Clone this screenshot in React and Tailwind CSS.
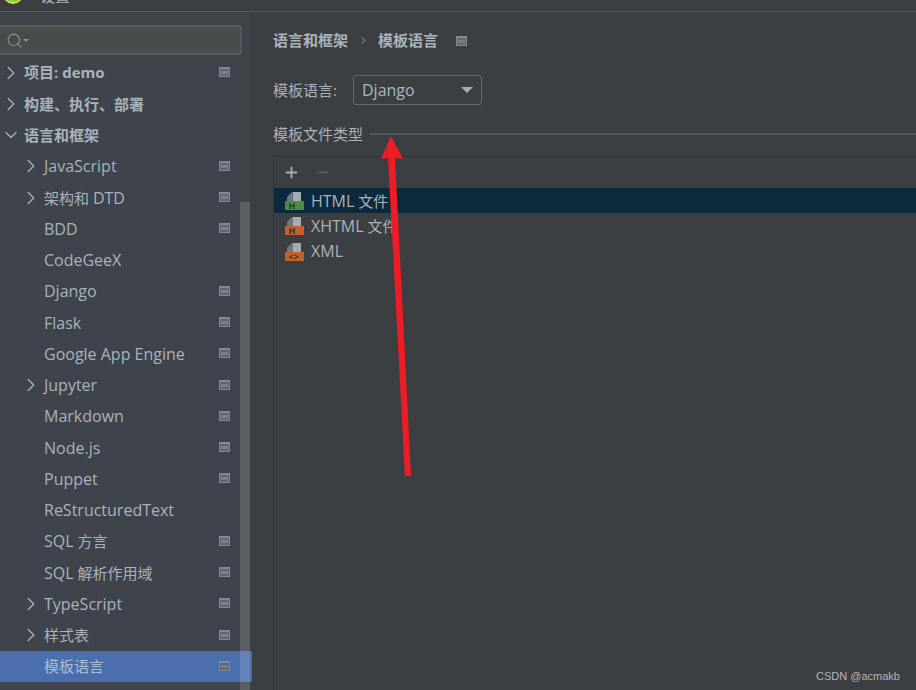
import { ChevronRight, ChevronDown, Search, Plus, Minus } from "lucide-react";

const font = { fontFamily: '"Open Sans", "Noto Sans CJK SC", sans-serif' };

const itens = [
  { nome: "项目: demo", seta: "dir", bold: true, proj: true },
  { nome: "构建、执行、部署", seta: "dir", bold: true },
  { nome: "语言和框架", seta: "baixo", bold: true },
  { latim: "JavaScript", seta: "dir", sub: true, proj: true },
  { nome: "架构和 ", latim: "DTD", seta: "dir", sub: true, proj: true },
  { latim: "BDD", sub: true, proj: true },
  { latim: "CodeGeeX", sub: true },
  { latim: "Django", sub: true, proj: true },
  { latim: "Flask", sub: true, proj: true },
  { latim: "Google App Engine", sub: true, proj: true },
  { latim: "Jupyter", seta: "dir", sub: true, proj: true },
  { latim: "Markdown", sub: true, proj: true },
  { latim: "Node.js", sub: true, proj: true },
  { latim: "Puppet", sub: true, proj: true },
  { latim: "ReStructuredText", sub: true },
  { latim: "SQL", nome: " 方言", antes: true, sub: true, proj: true },
  { latim: "SQL", nome: " 解析作用域", antes: true, sub: true, proj: true },
  { latim: "TypeScript", seta: "dir", sub: true, proj: true },
  { nome: "样式表", seta: "dir", sub: true, proj: true },
  { nome: "模板语言", sub: true, proj: true, ativo: true },
];

function IconeProjeto() {
  return (
    <span className="w-[11px] h-[10px] border border-t-2 border-[#818b94] bg-[#5f6770] flex items-center justify-center shrink-0">
      <span className="w-[7px] h-[3px] bg-[#78828b]"></span>
    </span>
  );
}

function IconeArquivo({ cor, letra }) {
  return (
    <svg width="19" height="19" viewBox="0 0 19 19" className="shrink-0">
      <path d="M2 10V6l5-5v9z" fill="#6f787f" />
      <path d="M7.5 1H16v9H7.5z" fill="#a3adb5" />
      <rect x="0" y="10" width="19" height="9" fill={cor} />
      <text x="3.5" y="17.5" fontSize="9" fontWeight="700" fill="#333a30" style={font}>
        {letra}
      </text>
    </svg>
  );
}

function Linha({ item }) {
  const latim = item.latim && <span className="text-[16px]">{item.latim}</span>;
  return (
    <div
      className={`h-[31.25px] flex items-center relative ${item.ativo ? "bg-[#4b6eaf] text-[#a9bdd2] -mr-[2px]" : "text-[#a9b3bb]"}`}
    >
      {item.seta === "dir" && (
        <ChevronRight
          size={22}
          strokeWidth={1.6}
          className={`absolute text-[#a8adb0] ${item.sub ? "left-[20px]" : "left-[0px]"}`}
        />
      )}
      {item.seta === "baixo" && (
        <ChevronDown size={20} strokeWidth={1.6} className="absolute left-[1px] text-[#a8adb0]" />
      )}
      <span
        className={`text-[15px] whitespace-pre ${item.sub ? "pl-[44px]" : "pl-[24px]"} ${item.bold ? "font-bold" : ""}`}
      >
        {item.antes && latim}
        {item.nome}
        {!item.antes && latim}
      </span>
      {item.proj && (
        <span className="absolute left-[219px] top-[10px]">
          <IconeProjeto />
        </span>
      )}
    </div>
  );
}

export default function App() {
  return (
    <div
      className="w-[916px] h-[690px] bg-[#3c3f41] overflow-hidden flex flex-col relative"
      style={font}
    >
      <div className="h-[12px] shrink-0 bg-[#3c3f41] border-b border-[#555759] relative overflow-hidden">
        <div className="absolute left-[3px] -top-[6px] w-[20px] h-[10px] rounded-b-full bg-[#7bd14b] border-b-2 border-[#e8e23a]"></div>
        <span className="absolute left-[40px] -top-[15px] text-[15px] text-[#a9b0b5]">设置</span>
      </div>

      <div className="flex flex-1 min-h-0">
        <aside className="w-[250px] shrink-0 bg-[#3e434c] relative">
          <div className="pt-[13px] pr-[8px] h-[45.5px] box-content">
            <div className="h-[30px] ml-[-2px] bg-[#484b4c] border-2 border-[#565a5e] rounded-[3px] flex items-center pl-[6px]">
              <Search size={17} strokeWidth={1.5} className="text-[#8d9296]" />
              <span className="w-0 h-0 border-x-[3px] border-x-transparent border-t-[3px] border-t-[#8d9296]"></span>
            </div>
          </div>
          <div className="mt-[-13.5px]">
            {itens.map((item) => (
              <Linha key={(item.latim || "") + (item.nome || "")} item={item} />
            ))}
          </div>
          <div className="absolute left-[240px] top-[190px] bottom-0 w-[10px] bg-white/15"></div>
        </aside>

        <main className="flex-1 min-w-0 pl-[23px] text-[#a9b3bb]">
          <div className="h-[57px] flex items-center text-[15px] font-bold">
            <span>语言和框架</span>
            <ChevronRight size={11} strokeWidth={1.8} className="ml-[10px] mr-[9px] text-[#a8adb0]" />
            <span>模板语言</span>
            <span className="ml-[18px]">
              <IconeProjeto />
            </span>
          </div>

          <div className="flex items-center h-[30px] mt-[6px] text-[15px]">
            <span className="w-[80px]">模板语言:</span>
            <div className="w-[129px] h-[30px] border border-[#64686b] rounded-[3px] flex items-center justify-between pl-[8px] pr-[8px] text-[16px] text-[#a9b7c6] bg-[#3c3f41]">
              <span>Django</span>
              <span className="w-0 h-0 border-x-[6px] border-x-transparent border-t-[6px] border-t-[#a8adb0]"></span>
            </div>
          </div>

          <div className="flex items-center h-[20px] mt-[19px] text-[15px]">
            <span>模板文件类型</span>
            <div className="flex-1 h-[2px] bg-[#555759] ml-[7px]"></div>
          </div>

          <div className="mt-[12px] border-l border-t border-[#323232] h-[540px] -mr-px">
            <div className="h-[31px] flex items-center pl-[9px] gap-[14px]">
              <Plus size={17} strokeWidth={2.6} className="text-[#a8adb0]" />
              <Minus size={17} strokeWidth={2.6} className="text-[#55585a]" />
            </div>
            <div className="h-[25px] bg-[#0d293e] flex items-center pl-[11px] gap-[7px] text-[15px]">
              <IconeArquivo cor="#4c8c3f" letra="H" />
              <span><span className="text-[16px]">HTML</span> 文件</span>
            </div>
            <div className="h-[25px] flex items-center pl-[11px] gap-[7px] text-[15px]">
              <IconeArquivo cor="#c4602d" letra="H" />
              <span><span className="text-[16px]">XHTML</span> 文件</span>
            </div>
            <div className="h-[26px] flex items-center pl-[11px] gap-[7px] text-[16px]">
              <IconeArquivo cor="#c4602d" letra="<>" />
              <span>XML</span>
            </div>
          </div>
        </main>
      </div>

      <svg width="916" height="690" className="absolute inset-0 pointer-events-none">
        <path d="M391 136 L403 159 L395 158 L411 476 L405 476 L388 158 L381 159 Z" fill="#ee1c25" />
      </svg>
      <span className="absolute left-[816px] top-[668px] text-[11px] font-['Liberation_Sans'] text-[#b4b6b7]">CSDN @acmakb</span>
    </div>
  );
}
